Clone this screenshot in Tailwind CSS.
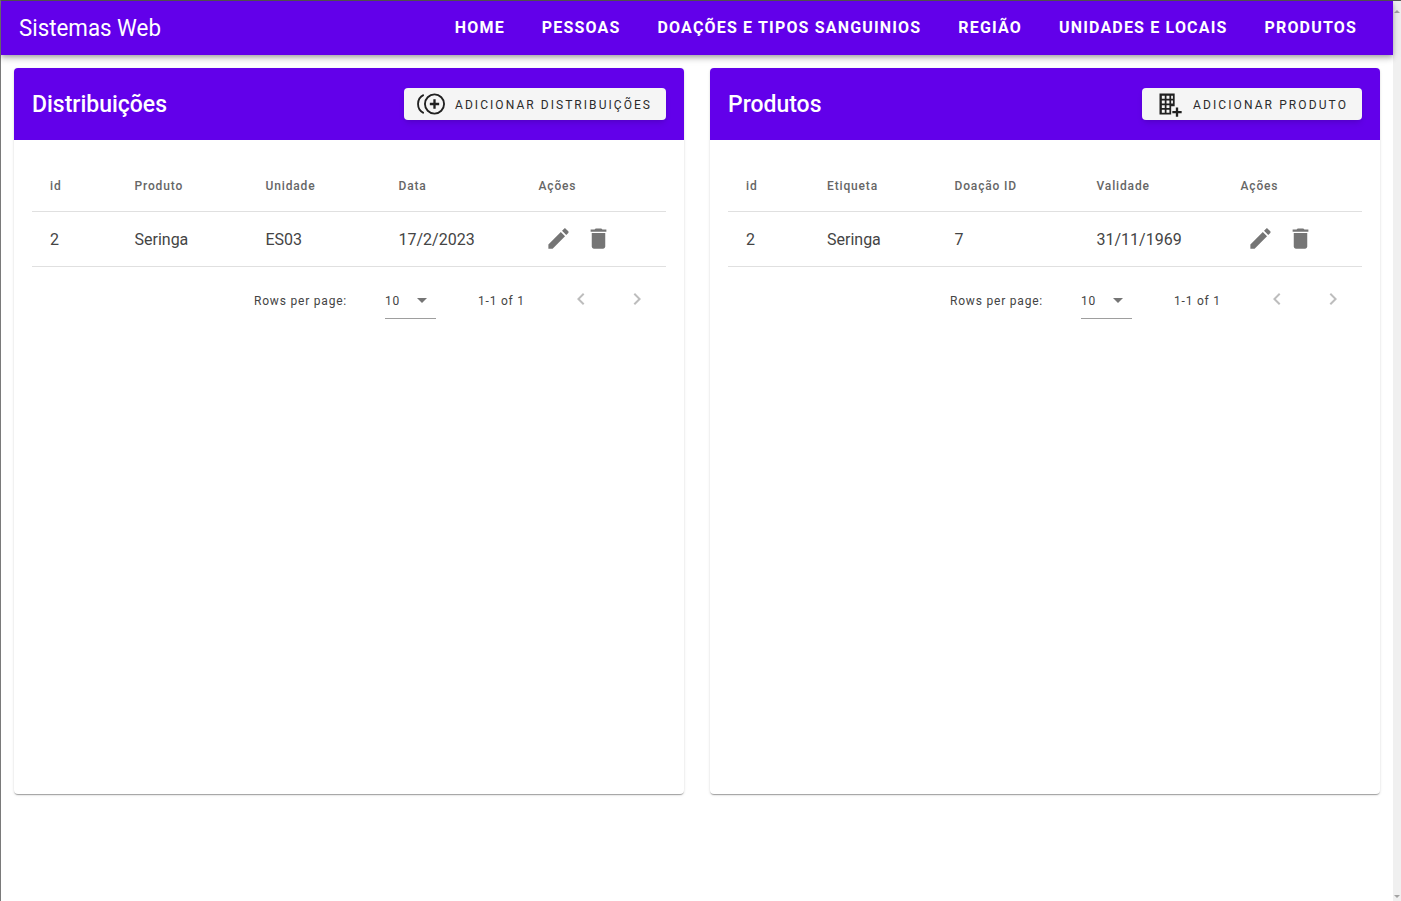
<!DOCTYPE html>
<html lang="pt-BR">
<head>
    <meta charset="UTF-8">
    <meta name="viewport" content="width=device-width, initial-scale=1.0">
    <title>Sistemas Web</title>
    <script src="https://cdn.jsdelivr.net/npm/@tailwindcss/browser@4"></script>
</head>
<body class="bg-white font-['Roboto',sans-serif] overflow-hidden">
    <div class="flex h-[901px] border-l border-t border-l-[#7a7a7a] border-t-[#555555]">
        <div class="flex-1 min-w-0">
            <!-- Barra superior -->
            <header class="relative z-10 flex h-[54px] items-center justify-between bg-[#6200ea] pl-[18px] pr-[36px] text-white shadow-[0_2px_4px_-1px_rgba(0,0,0,.2),0_4px_5px_0_rgba(0,0,0,.14),0_1px_10px_0_rgba(0,0,0,.12)]">
                <span class="inline-block origin-left scale-x-[0.93] text-[24px] leading-[54px]">Sistemas Web</span>
                <nav class="flex gap-[37px] text-[16px] font-bold tracking-[1.17px]">
                    <a>HOME</a>
                    <a>PESSOAS</a>
                    <a>DOAÇÕES E TIPOS SANGUINIOS</a>
                    <a>REGIÃO</a>
                    <a>UNIDADES E LOCAIS</a>
                    <a>PRODUTOS</a>
                </nav>
            </header>

            <main class="flex gap-[26px] pl-[13px] pt-[13px]">
                <!-- Distribuições -->
                <section class="h-[726px] w-[670px] overflow-hidden rounded bg-white shadow-[0_2px_1px_-1px_rgba(0,0,0,.2),0_1px_1px_0_rgba(0,0,0,.14),0_1px_3px_0_rgba(0,0,0,.12)]">
                    <div class="flex h-[72px] items-center justify-between bg-[#6200ea] px-[18px] text-white">
                        <h2 class="origin-left scale-x-[0.957] pb-[1px] text-[24px] font-medium">Distribuições</h2>
                        <button class="flex h-[32px] items-center gap-[10px] rounded bg-[#f5f5f5] pl-[13px] pr-[14px] text-[12px] tracking-[2.05px] text-[#2b2b2b] shadow-md">
                            <svg class="h-[28px] w-[28px]" viewBox="0 0 24 24" fill="none" stroke="#212121" stroke-width="1.6"><circle cx="15" cy="12" r="8.2"/><path d="M15 8v8M11 12h8" stroke-width="2"/><path d="M5.8 4.2C2.8 5.6.9 8.6.9 12s1.9 6.4 4.9 7.8"/></svg>
                            <span class="pt-[1px]">ADICIONAR DISTRIBUIÇÕES</span>
                        </button>
                    </div>
                    <div class="px-[18px]">
                        <table class="w-[634px] table-fixed text-left">
                            <colgroup>
                                <col class="w-[84.5px]"><col class="w-[131px]"><col class="w-[133px]"><col class="w-[140px]"><col>
                            </colgroup>
                            <thead>
                                <tr class="h-[71px] border-b border-[#e0e0e0] text-[12px] font-medium tracking-[0.85px] text-[#666666]">
                                    <th class="pl-[18px] pt-[22px] font-medium">id</th>
                                    <th class="pl-[18px] pt-[22px] font-medium">Produto</th>
                                    <th class="pl-[18px] pt-[22px] font-medium">Unidade</th>
                                    <th class="pl-[18px] pt-[22px] font-medium">Data</th>
                                    <th class="pl-[18px] pt-[22px] font-medium">Ações</th>
                                </tr>
                            </thead>
                            <tbody>
                                <tr class="h-[55px] border-b border-[#e0e0e0] text-[16px] text-[#444444]">
                                    <td class="pl-[18px] pt-[2px]">2</td>
                                    <td class="pl-[18px] pt-[2px]">Seringa</td>
                                    <td class="pl-[18px] pt-[2px]">ES03</td>
                                    <td class="pl-[18px] pt-[2px]">17/2/2023</td>
                                    <td class="pl-[24.5px]">
                                        <div class="flex gap-[12.5px]">
                                            <svg class="h-[27px] w-[27px]" viewBox="0 0 24 24" fill="#757575"><path d="M3 17.25V21h3.75L17.81 9.94l-3.75-3.75L3 17.25zM20.71 7.04c.39-.39.39-1.02 0-1.41l-2.34-2.34c-.39-.39-1.02-.39-1.41 0l-1.83 1.83 3.75 3.75 1.83-1.83z"/></svg>
                                            <svg class="h-[27px] w-[27px]" viewBox="0 0 24 24" fill="#757575"><path d="M6 19c0 1.1.9 2 2 2h8c1.1 0 2-.9 2-2V7H6v12zM19 4h-3.5l-1-1h-5l-1 1H5v2h14V4z"/></svg>
                                        </div>
                                    </td>
                                </tr>
                            </tbody>
                        </table>
                        <div class="flex h-[68px] items-center text-[12px] tracking-[0.8px] text-[#444444]">
                            <span class="ml-[222px] w-[131px]">Rows per page:</span>
                            <div class="flex h-[37px] w-[51px] items-center justify-between border-b border-[#9e9e9e] pt-[2px] text-[#444444]">
                                10
                                <svg class="mr-[2px] h-[24px] w-[24px] mt-[-3px]" viewBox="0 0 24 24" fill="#757575"><path d="M7 10l5 5 5-5z"/></svg>
                            </div>
                            <span class="ml-[42px] w-[91px]">1-1 of 1</span>
                            <svg class="mt-[-4px] h-[24px] w-[24px]" viewBox="0 0 24 24" fill="#bdbdbd"><path d="M15.41 7.41 14 6l-6 6 6 6 1.41-1.41L10.83 12z"/></svg>
                            <svg class="ml-[32px] mt-[-4px] h-[24px] w-[24px]" viewBox="0 0 24 24" fill="#bdbdbd"><path d="M10 6 8.59 7.41 13.17 12l-4.58 4.59L10 18l6-6z"/></svg>
                        </div>
                    </div>
                </section>

                <!-- Produtos -->
                <section class="h-[726px] w-[670px] overflow-hidden rounded bg-white shadow-[0_2px_1px_-1px_rgba(0,0,0,.2),0_1px_1px_0_rgba(0,0,0,.14),0_1px_3px_0_rgba(0,0,0,.12)]">
                    <div class="flex h-[72px] items-center justify-between bg-[#6200ea] px-[18px] text-white">
                        <h2 class="origin-left scale-x-[0.957] pb-[1px] text-[24px] font-medium">Produtos</h2>
                        <button class="flex h-[32px] items-center gap-[9px] rounded bg-[#f5f5f5] pl-[14px] pr-[14px] text-[12px] tracking-[2.1px] text-[#2b2b2b] shadow-md">
                            <svg class="h-[28px] w-[28px]" viewBox="0 0 24 24" fill="#212121"><path d="M3 3h13v11h-3v7H3zM5 5v2.5h2.5V5zm4 0v2.5h2.5V5zm4 0v2.5h1.5V5zM5 9v2.5h2.5V9zm4 0v2.5h2.5V9zm4 0v2.5h1.5V9zM5 13v2.5h2.5V13zm4 0v2.5h2.5V13zM5 17v2.5h2.5V17zm4 0v2.5h2.5V17zM17 15h2v3h3v2h-3v3h-2v-3h-3v-2h3z"/></svg>
                            <span class="pt-[1px]">ADICIONAR PRODUTO</span>
                        </button>
                    </div>
                    <div class="px-[18px]">
                        <table class="w-[634px] table-fixed text-left">
                            <colgroup>
                                <col class="w-[81px]"><col class="w-[127.5px]"><col class="w-[142px]"><col class="w-[144px]"><col>
                            </colgroup>
                            <thead>
                                <tr class="h-[71px] border-b border-[#e0e0e0] text-[12px] font-medium tracking-[0.85px] text-[#666666]">
                                    <th class="pl-[18px] pt-[22px] font-medium">id</th>
                                    <th class="pl-[18px] pt-[22px] font-medium">Etiqueta</th>
                                    <th class="pl-[18px] pt-[22px] font-medium">Doação ID</th>
                                    <th class="pl-[18px] pt-[22px] font-medium">Validade</th>
                                    <th class="pl-[18px] pt-[22px] font-medium">Ações</th>
                                </tr>
                            </thead>
                            <tbody>
                                <tr class="h-[55px] border-b border-[#e0e0e0] text-[16px] text-[#444444]">
                                    <td class="pl-[18px] pt-[2px]">2</td>
                                    <td class="pl-[18px] pt-[2px]">Seringa</td>
                                    <td class="pl-[18px] pt-[2px]">7</td>
                                    <td class="pl-[18px] pt-[2px]">31/11/1969</td>
                                    <td class="pl-[24.5px]">
                                        <div class="flex gap-[12.5px]">
                                            <svg class="h-[27px] w-[27px]" viewBox="0 0 24 24" fill="#757575"><path d="M3 17.25V21h3.75L17.81 9.94l-3.75-3.75L3 17.25zM20.71 7.04c.39-.39.39-1.02 0-1.41l-2.34-2.34c-.39-.39-1.02-.39-1.41 0l-1.83 1.83 3.75 3.75 1.83-1.83z"/></svg>
                                            <svg class="h-[27px] w-[27px]" viewBox="0 0 24 24" fill="#757575"><path d="M6 19c0 1.1.9 2 2 2h8c1.1 0 2-.9 2-2V7H6v12zM19 4h-3.5l-1-1h-5l-1 1H5v2h14V4z"/></svg>
                                        </div>
                                    </td>
                                </tr>
                            </tbody>
                        </table>
                        <div class="flex h-[68px] items-center text-[12px] tracking-[0.8px] text-[#444444]">
                            <span class="ml-[222px] w-[131px]">Rows per page:</span>
                            <div class="flex h-[37px] w-[51px] items-center justify-between border-b border-[#9e9e9e] pt-[2px] text-[#444444]">
                                10
                                <svg class="mr-[2px] h-[24px] w-[24px] mt-[-3px]" viewBox="0 0 24 24" fill="#757575"><path d="M7 10l5 5 5-5z"/></svg>
                            </div>
                            <span class="ml-[42px] w-[91px]">1-1 of 1</span>
                            <svg class="mt-[-4px] h-[24px] w-[24px]" viewBox="0 0 24 24" fill="#bdbdbd"><path d="M15.41 7.41 14 6l-6 6 6 6 1.41-1.41L10.83 12z"/></svg>
                            <svg class="ml-[32px] mt-[-4px] h-[24px] w-[24px]" viewBox="0 0 24 24" fill="#bdbdbd"><path d="M10 6 8.59 7.41 13.17 12l-4.58 4.59L10 18l6-6z"/></svg>
                        </div>
                    </div>
                </section>
            </main>
        </div>

        <!-- Barra de rolagem -->
        <aside class="relative w-[8px] shrink-0 bg-[#f0f0f0]">
            <span class="absolute right-[1px] top-[9px] h-0 w-0 border-x-[3px] border-b-[3px] border-x-transparent border-b-[#a3a3a3]"></span>
            <span class="absolute bottom-[3px] right-[1px] h-0 w-0 border-x-[3px] border-t-[3px] border-x-transparent border-t-[#a3a3a3]"></span>
        </aside>
    </div>
</body>
</html>
